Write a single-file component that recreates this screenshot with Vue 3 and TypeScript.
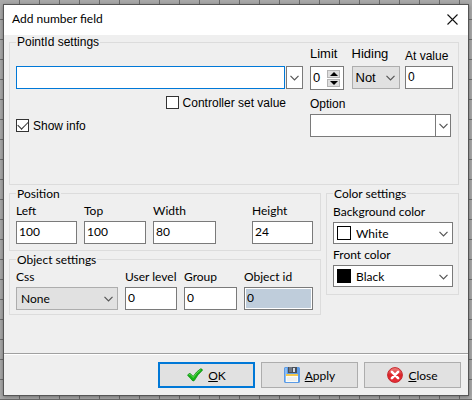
<script setup lang="ts">
import { ref } from 'vue'

const pointId = ref('')
const controllerSet = ref(false)
const showInfo = ref(true)
const limit = ref(0)
const hiding = ref('Not')
const atValue = ref('0')
const option = ref('')

const position = ref([
  { id: 'left', label: 'Left', value: '100' },
  { id: 'top', label: 'Top', value: '100' },
  { id: 'width', label: 'Width', value: '80' },
  { id: 'height', label: 'Height', value: '24' },
])

const css = ref('None')
const userLevel = ref('0')
const group = ref('0')
const objectId = ref('0')

const colors = ref([
  { id: 'background', label: 'Background color', value: 'White' },
  { id: 'front', label: 'Front color', value: 'Black' },
])
</script>

<template>
  <main class="canvas">
    <form class="dialog" @submit.prevent>
      <header class="titlebar">
        <h1>Add number field</h1>
        <button type="button" class="close" aria-label="Close window">
          <svg width="11" height="11" viewBox="0 0 11 11"><path d="M.5.5l10 10M10.5.5l-10 10" stroke="#111" stroke-width="1.1" /></svg>
        </button>
      </header>

      <div class="content">
        <fieldset class="point">
          <legend>PointId settings</legend>
          <div class="point-row">
            <div class="point-main">
              <div class="picker">
                <input v-model="pointId" class="box active" type="text" aria-label="PointId" />
                <button type="button" class="box drop" aria-label="Choose PointId">
                  <svg class="chev" viewBox="0 0 9 6"><path d="M.5.8l4 4 4-4" /></svg>
                </button>
              </div>
              <label class="check controller"><input v-model="controllerSet" type="checkbox" />Controller set value</label>
              <label class="check"><input v-model="showInfo" type="checkbox" />Show info</label>
            </div>
            <div class="point-side">
              <div class="side-row">
                <div class="field limit">
                  <label for="limit">Limit</label>
                  <div class="box spin">
                    <input id="limit" v-model="limit" type="text" />
                    <div class="steps">
                      <button type="button" aria-label="Increase" @click="limit++"><svg viewBox="0 0 8 4"><path d="M0 4L4 0l4 4z" /></svg></button>
                      <button type="button" aria-label="Decrease" @click="limit--"><svg viewBox="0 0 8 4"><path d="M0 0l4 4 4-4z" /></svg></button>
                    </div>
                  </div>
                </div>
                <div class="field hiding">
                  <label for="hiding">Hiding</label>
                  <div class="box select gray">
                    <select id="hiding" v-model="hiding"><option>Not</option></select>
                    <svg class="chev" viewBox="0 0 9 6"><path d="M.5.8l4 4 4-4" /></svg>
                  </div>
                </div>
                <div class="field at">
                  <label for="at">At value</label>
                  <input id="at" v-model="atValue" class="box" type="text" />
                </div>
              </div>
              <div class="field option">
                <label for="option">Option</label>
                <div class="box combo">
                  <input id="option" v-model="option" type="text" />
                  <button type="button" aria-label="Choose option">
                    <svg class="chev" viewBox="0 0 9 6"><path d="M.5.8l4 4 4-4" /></svg>
                  </button>
                </div>
              </div>
            </div>
          </div>
        </fieldset>

        <div class="columns">
          <div class="left">
            <fieldset>
              <legend>Position</legend>
              <div class="fields position">
                <div v-for="p in position" :key="p.id" class="field">
                  <label :for="p.id">{{ p.label }}</label>
                  <input :id="p.id" v-model="p.value" class="box" type="text" />
                </div>
              </div>
            </fieldset>
            <fieldset>
              <legend>Object settings</legend>
              <div class="fields object">
                <div class="field">
                  <label for="css">Css</label>
                  <div class="box select gray">
                    <select id="css" v-model="css"><option>None</option></select>
                    <svg class="chev" viewBox="0 0 9 6"><path d="M.5.8l4 4 4-4" /></svg>
                  </div>
                </div>
                <div class="field">
                  <label for="level">User level</label>
                  <input id="level" v-model="userLevel" class="box" type="text" />
                </div>
                <div class="field">
                  <label for="group">Group</label>
                  <input id="group" v-model="group" class="box" type="text" />
                </div>
                <div class="field">
                  <label for="object">Object id</label>
                  <input id="object" v-model="objectId" class="box locked" type="text" readonly />
                </div>
              </div>
            </fieldset>
          </div>
          <fieldset class="colors">
            <legend>Color settings</legend>
            <div v-for="c in colors" :key="c.id" class="field">
              <label :for="c.id">{{ c.label }}</label>
              <div class="box select">
                <span class="swatch" :style="{ backgroundColor: c.value }"></span>
                <select :id="c.id" v-model="c.value"><option>White</option><option>Black</option></select>
                <svg class="chev" viewBox="0 0 9 6"><path d="M.5.8l4 4 4-4" /></svg>
              </div>
            </div>
          </fieldset>
        </div>
      </div>

      <footer class="actions">
        <button type="submit" class="default">
          <svg width="16" height="14" viewBox="0 0 16 14">
            <path d="M.6 7.4Q1.6 5.2 3.2 5.4L6.2 8.4Q9.4 3.4 13.4.9 15.2.6 15.5 2.2 10.6 6.4 7.4 12.4q-1.2 1-2.2 0Q3 9.4.6 7.4z" fill="#14b314" stroke="#129018" stroke-width=".8" stroke-linejoin="round" />
            <path d="M1.8 7l1.2-.7 3.2 3.2Q9.4 4.6 13.6 1.9" fill="none" stroke="#62d755" stroke-width="1" />
          </svg>
          <span><u>O</u>K</span>
        </button>
        <button type="button">
          <svg width="16" height="16" viewBox="0 0 16 16">
            <path d="M1 0h14l1 1v14l-1 1H1l-1-1V1z" fill="#5b9be6" />
            <path d="M1 1h2v14H1z" fill="#8bbcf3" />
            <path d="M4 0h9v6H4z" fill="#4a4f57" />
            <path d="M5 0h3v5H5z" fill="#717780" />
            <path d="M9 1h2v4H9z" fill="#d5dbe4" />
            <path d="M2 8h12v7H2z" fill="#fbfbf6" />
            <path d="M2 7h12v2H2z" fill="#f5c84a" />
            <path d="M3 11h10M3 13h10" stroke="#d7dce2" stroke-width=".7" />
          </svg>
          <span><u>A</u>pply</span>
        </button>
        <button type="button">
          <svg width="16" height="16" viewBox="0 0 16 16">
            <defs>
              <linearGradient id="red" x1="0" y1="0" x2="0" y2="1">
                <stop offset="0" stop-color="#f08a86" />
                <stop offset=".5" stop-color="#dc2428" />
                <stop offset="1" stop-color="#e8303a" />
              </linearGradient>
            </defs>
            <circle cx="8" cy="8" r="7.4" fill="url(#red)" stroke="#c4262c" />
            <path d="M4.9 4.9l6.2 6.2M11.1 4.9l-6.2 6.2" stroke="#fff" stroke-width="2.6" stroke-linecap="round" />
          </svg>
          <span><u>C</u>lose</span>
        </button>
      </footer>
    </form>
  </main>
</template>

<style>
body {
  margin: 0;
}
</style>

<style scoped>
* {
  box-sizing: border-box;
}
.canvas {
  min-height: 100vh;
  padding: 4px 3px;
  background-color: #a9a9a9;
  background-image: linear-gradient(to right, transparent 19px, #6c6c6c 19px),
    linear-gradient(to bottom, transparent 19px, #6c6c6c 19px);
  background-size: 20px 20px;
  font-family: Lato, "Open Sans", sans-serif;
  font-size: 12px;
  color: #000;
}
.dialog {
  border: 1px solid #555;
  background: #efefef;
  box-shadow: 0 1px 4px rgba(0, 0, 0, 0.35);
}
.titlebar {
  display: flex;
  align-items: center;
  justify-content: space-between;
  height: 30px;
  padding: 0 10px 2px 8px;
  background: #fff;
}
h1 {
  margin: 0;
  font-size: 12px;
  font-weight: 400;
  line-height: 16px;
}
button,
input,
select {
  margin: 0;
  padding: 0;
  border: 0;
  border-radius: 0;
  background: none;
  font: inherit;
  color: inherit;
  outline: 0;
  min-width: 0;
}
button {
  display: flex;
  align-items: center;
  justify-content: center;
}
.content {
  padding: 1px 9px 38px 5px;
}
fieldset {
  min-width: 0;
  margin: 0;
  padding: 3px 7px 6px 6px;
  border: 1px solid #dcdcdc;
}
legend {
  padding: 0 1px;
  line-height: 13px;
  white-space: nowrap;
}
.field {
  display: flex;
  flex-direction: column;
  gap: 2px;
  min-width: 0;
}
.field label {
  line-height: 16px;
  white-space: nowrap;
}
.box {
  width: 100%;
  height: 23px;
  border: 1px solid #7a7a7a;
  background: #fff;
}
input.box {
  padding: 0 2px 2px;
}
.active {
  border-color: #0078d7;
}
.locked {
  background: #bfcddb;
  box-shadow: inset 0 0 0 1px #fff;
}
.chev {
  width: 9px;
  height: 6px;
  fill: none;
  stroke: #555;
  stroke-width: 1.2;
}
.select {
  position: relative;
  display: flex;
  align-items: center;
}
.select select {
  flex: 1;
  height: 100%;
  padding: 0 16px 0 4px;
  appearance: none;
}
.select .chev {
  position: absolute;
  right: 4px;
  top: 8px;
  pointer-events: none;
}
.gray {
  border-color: #adadad;
  background: #e1e1e1;
}

.point {
  padding: 0 5px 47px 6px;
  font-family: "Liberation Sans", Arial, sans-serif;
}
.point-row {
  display: flex;
  gap: 7px;
}
.point-main {
  display: flex;
  flex: 1;
  flex-direction: column;
  align-items: flex-start;
  min-width: 0;
  padding-top: 17px;
}
.picker {
  display: flex;
  gap: 1px;
  width: 100%;
}
.drop {
  flex: none;
  width: 17px;
}
.check {
  display: flex;
  align-items: center;
  gap: 4px;
  height: 13px;
  margin-top: 10px;
  white-space: nowrap;
}
.check.controller {
  align-self: flex-end;
  margin-top: 7px;
  padding-right: 17px;
}
.check input {
  width: 13px;
  height: 13px;
  border: 1px solid #333;
  background: #fff;
  appearance: none;
}
.check input:checked {
  display: grid;
  place-items: center;
}
.check input:checked::before {
  content: "";
  width: 9px;
  height: 5px;
  margin-bottom: 3px;
  border: solid #333;
  border-width: 0 0 1px 1px;
  transform: rotate(-45deg);
}
.point-side {
  display: flex;
  flex: none;
  flex-direction: column;
  gap: 9px;
  width: 143px;
}
.side-row {
  display: flex;
  align-items: flex-start;
  justify-content: space-between;
}
.point .field {
  gap: 7px;
}
.point .field label {
  line-height: 10px;
}
.limit,
.hiding {
  font-size: 13px;
}
.limit {
  width: 34px;
}
.hiding {
  width: 48px;
  margin-left: 2px;
}
.at {
  width: 48px;
}
.point .at,
.point .option {
  gap: 5px;
}
.point .at {
  padding-top: 2px;
}
.spin {
  display: flex;
  align-items: center;
  justify-content: space-between;
  height: 24px;
  padding: 0 3px 0 2px;
}
.spin input {
  width: 10px;
  padding-bottom: 2px;
}
.steps {
  display: grid;
  gap: 1px;
}
.steps button {
  width: 13px;
  height: 8px;
  border: 1px solid #b4b4b4;
  background: #dedede;
}
.steps svg {
  width: 8px;
  height: 4px;
}
.point .select select {
  padding-left: 3px;
}
.combo {
  display: flex;
  width: 141px;
}
.combo input {
  flex: 1;
  padding: 0 3px;
}
.combo button {
  width: 15px;
  border-left: 1px solid #7a7a7a;
}

.columns {
  display: flex;
  align-items: flex-start;
  gap: 5px;
  padding-top: 2px;
}
.left {
  display: grid;
  flex: 1;
  gap: 2px;
  min-width: 0;
}
.fields {
  display: grid;
  gap: 7px;
}
.position {
  grid-template-columns: 61fr 62fr 63fr 22fr 61fr;
}
.position .field:last-child {
  grid-column: 5;
}
.left fieldset:last-child {
  padding-bottom: 4px;
}
.object {
  grid-template-columns: 102fr 52fr 53fr 69fr;
}
.colors {
  width: 133px;
  padding: 4px 5px 7px 6px;
}
.colors .field + .field {
  margin-top: 3px;
}
.colors .box {
  height: 22px;
}
.colors .select select {
  padding-left: 5px;
}
.swatch {
  width: 14px;
  height: 14px;
  margin-left: 3px;
  border: 1px solid #000;
}

.actions {
  display: flex;
  justify-content: flex-end;
  gap: 6px;
  padding: 7px 7px 7px 4px;
  border-top: 1px solid #a0a0a0;
  box-shadow: inset 0 1px 0 #fff;
}
.actions button {
  gap: 5px;
  width: 97px;
  height: 26px;
  margin-top: 1px;
  border: 1px solid #adadad;
  background: #e1e1e1;
}
.actions .default {
  border: 2px solid #0078d7;
}
</style>
